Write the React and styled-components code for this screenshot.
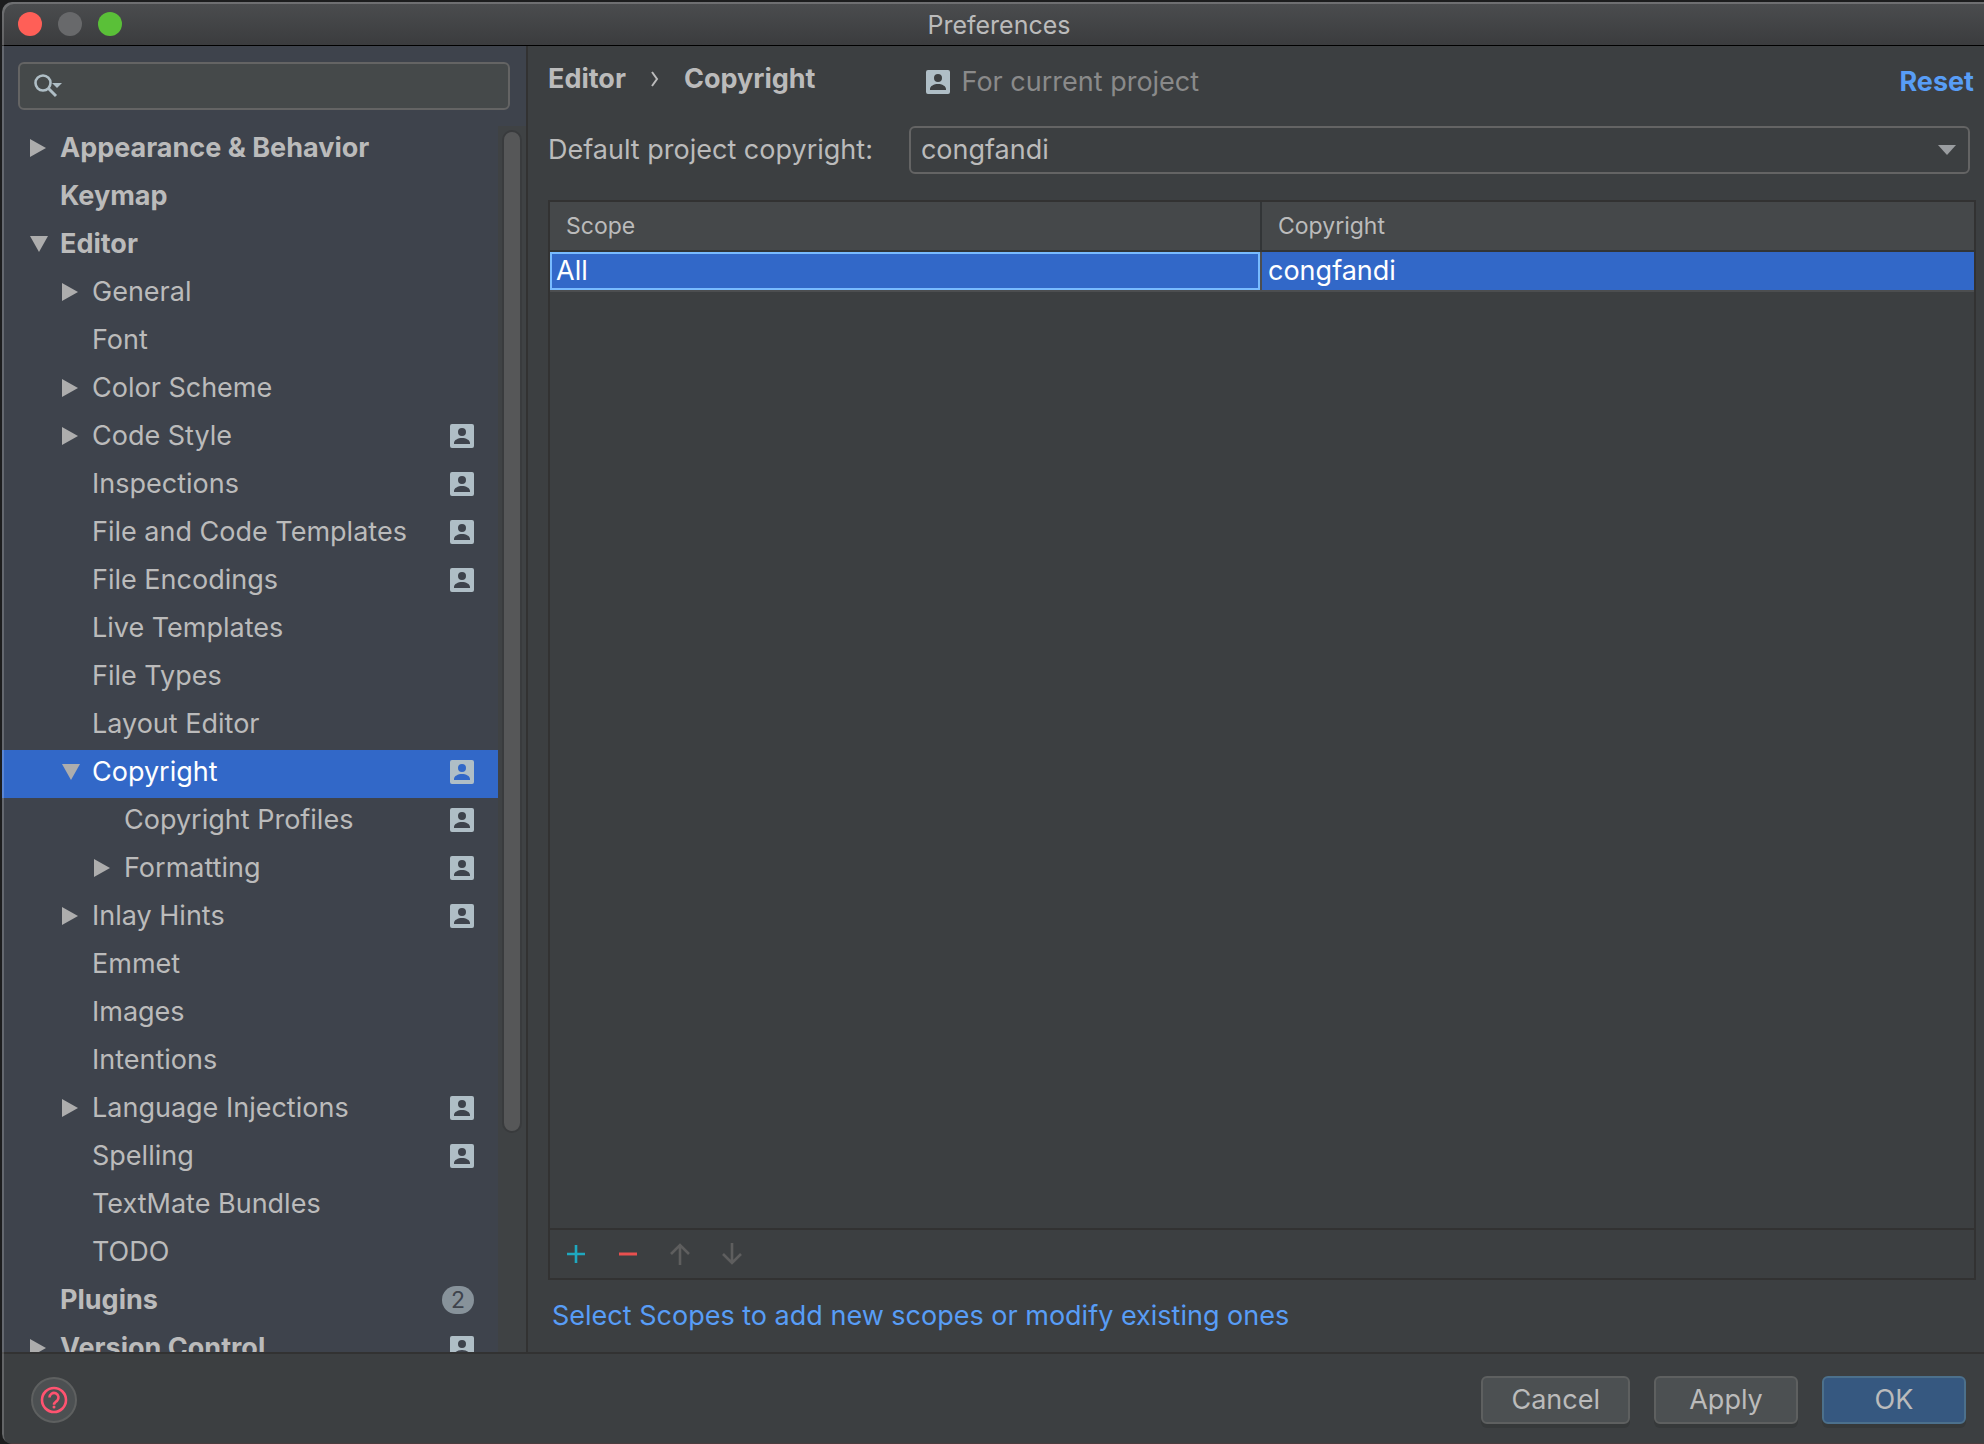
import React, { useState } from "react";
import styled, { createGlobalStyle, css } from "styled-components";

const GlobalStyle = createGlobalStyle`
  * {
    box-sizing: border-box;
  }

  body {
    margin: 0;
    background: #1c1d1e;
    color: #bbbbbb;
    font-family: Inter, "Liberation Sans", sans-serif;
    font-size: 27px;
    line-height: 32px;
  }

  button,
  input,
  select {
    font: inherit;
    color: inherit;
  }
`;

const Dialog = styled.div`
  position: relative;
  display: flex;
  flex-direction: column;
  height: calc(100vh - 2px);
  margin: 2px 0 0 2px;
  background: #3c3f41;
  border-radius: 10px 0 0 10px;
  overflow: hidden;

  &::after {
    content: "";
    position: absolute;
    inset: 0;
    border-radius: 10px 0 0 10px;
    box-shadow: inset 2px 2px 0 rgba(255, 255, 255, 0.2);
    pointer-events: none;
  }
`;

const TitleBar = styled.header`
  display: grid;
  grid-template-columns: 1fr auto 1fr;
  align-items: center;
  height: 44px;
  flex-shrink: 0;
  padding: 0 4px 0 16px;
  background: linear-gradient(#4b4d4f, #3b3c3e);
  border-bottom: 1px solid #000;
`;

const Lights = styled.div`
  display: flex;
  gap: 16px;
`;

const Light = styled.button`
  width: 24px;
  height: 24px;
  padding: 0;
  border: none;
  border-radius: 50%;
  background: ${(props) => props.$color};
`;

const Title = styled.h1`
  margin: 0;
  padding-top: 2px;
  font-size: 25px;
  font-weight: 400;
`;

const Body = styled.div`
  display: flex;
  flex: 1;
  min-height: 0;
`;

const Sidebar = styled.aside`
  display: flex;
  flex-direction: column;
  width: 526px;
  flex-shrink: 0;
  background: #3e434c;
  border-right: 2px solid #323232;
`;

const SearchBox = styled.label`
  display: flex;
  align-items: center;
  height: 48px;
  flex-shrink: 0;
  margin: 16px;
  padding: 0 12px;
  background: #45494a;
  border: 2px solid #646464;
  border-radius: 6px;
`;

const SearchInput = styled.input`
  flex: 1;
  min-width: 0;
  margin-left: 8px;
  padding: 0;
  background: none;
  border: none;
  outline: none;
`;

const TreeArea = styled.div`
  display: flex;
  flex: 1;
  min-height: 0;
`;

const Tree = styled.ul`
  flex: 1;
  margin: 0;
  padding: 0;
  list-style: none;
  overflow-y: auto;
  scrollbar-width: none;
`;

const Row = styled.button`
  display: flex;
  align-items: center;
  width: 100%;
  height: 48px;
  padding: 0 24px 4px ${(props) => 26 + props.$level * 32}px;
  background: none;
  border: none;
  text-align: left;
  white-space: nowrap;
  font-weight: ${(props) => (props.$level === 0 ? 700 : 400)};

  ${(props) =>
    props.$selected &&
    css`
      background: #3268c8;
      color: #ffffff;
    `}
`;

const ArrowSlot = styled.span`
  display: flex;
  align-items: center;
  width: 32px;
`;

const RowLabel = styled.span`
  flex: 1;
`;

const Badge = styled.span`
  width: 32px;
  height: 28px;
  border-radius: 14px;
  background: #87929a;
  color: #3e434c;
  font-size: 23px;
  font-weight: 400;
  line-height: 28px;
  text-align: center;
`;

const Track = styled.div`
  width: 28px;
  padding: 4px;
  background: #3f4244;
`;

const Thumb = styled.div`
  width: 20px;
  height: calc(82% + 4px);
  background: #565758;
  border: 2px solid #393b3d;
  border-radius: 10px;
`;

const Content = styled.main`
  display: flex;
  flex-direction: column;
  flex: 1;
  min-width: 0;
  padding: 16px 8px 20px 20px;
`;

const Heading = styled.div`
  display: flex;
  align-items: center;
  height: 40px;
`;

const Crumbs = styled.h2`
  display: flex;
  align-items: center;
  gap: 24px;
  margin: 0;
  padding-bottom: 6px;
  font-size: 27px;
  font-weight: 700;
`;

const ProjectNote = styled.span`
  display: flex;
  align-items: center;
  gap: 12px;
  flex: 1;
  margin-left: 110px;
  color: #8a8a8a;
`;

const ResetLink = styled.a`
  padding-right: 2px;
  color: #589df6;
  font-weight: 700;
  text-decoration: none;
`;

const Field = styled.div`
  display: flex;
  align-items: center;
  gap: 36px;
  margin: 24px 6px 26px 0;
`;

const SelectWrap = styled.div`
  display: grid;
  flex: 1;
  align-items: center;

  > * {
    grid-area: 1 / 1;
  }

  > svg {
    justify-self: end;
    margin-right: 14px;
    pointer-events: none;
  }
`;

const Select = styled.select`
  width: 100%;
  height: 48px;
  padding: 0 10px;
  appearance: none;
  background: #3c3f41;
  border: 2px solid #646464;
  border-radius: 6px;
`;

const Panel = styled.section`
  display: flex;
  flex-direction: column;
  flex: 1;
  border: 2px solid #323232;
`;

const ScopeTable = styled.table`
  width: 100%;
  border-collapse: separate;
  border-spacing: 0;
  table-layout: fixed;
`;

const HeadCell = styled.th`
  height: 50px;
  padding: 0 16px;
  background: #45484a;
  border-bottom: 2px solid #323537;
  border-right: ${(props) => (props.$last ? "none" : "2px solid #323537")};
  font-size: 23px;
  font-weight: 400;
  text-align: left;
`;

const Cell = styled.td`
  height: 40px;
  padding: 0 6px;
  background: #3268c8;
  border-bottom: 2px solid #4c4e50;
  color: #ffffff;

  ${(props) =>
    props.$focused &&
    css`
      border-right: 2px solid #4c4e50;
      box-shadow: inset 0 0 0 2px #78bbff;
    `}
`;

const Toolbar = styled.div`
  display: flex;
  gap: 20px;
  margin-top: auto;
  padding: 8px 10px;
  border-top: 2px solid #323232;
`;

const ToolButton = styled.button`
  display: flex;
  align-items: center;
  justify-content: center;
  width: 32px;
  height: 32px;
  padding: 0;
  background: none;
  border: none;
`;

const ScopesLink = styled.a`
  align-self: flex-start;
  margin: 20px 0 0 4px;
  color: #589df6;
  text-decoration: none;
`;

const Footer = styled.footer`
  display: flex;
  align-items: center;
  gap: 24px;
  flex-shrink: 0;
  padding: 22px 18px 19px 29px;
  border-top: 2px solid #323232;
  border-bottom: 1px solid #4a3c3e;
`;

const HelpButton = styled.button`
  display: flex;
  align-items: center;
  justify-content: center;
  width: 46px;
  height: 46px;
  margin-right: auto;
  padding: 0;
  background: #4c5052;
  border: 2px solid #5e6060;
  border-radius: 50%;
`;

const Button = styled.button`
  min-width: 144px;
  height: 48px;
  padding: 0 28px;
  background: ${(props) => (props.$primary ? "#365880" : "#4c5052")};
  border: 2px solid ${(props) => (props.$primary ? "#4c708c" : "#5e6060")};
  border-radius: 6px;
  box-shadow: 0 4px 0 #36393a;
`;

const Arrow = ({ open }) => (
  <svg width="20" height="20" viewBox="0 0 20 20" fill="#adadad">
    {open ? <path d="M2 2h18l-9 16z" /> : <path d="M2 1v18l16-9z" />}
  </svg>
);

const ProjectIcon = () => (
  <svg width="24" height="24" viewBox="0 0 24 24" fill="#afbec6">
    <path
      fillRule="evenodd"
      d="M2 0h20a2 2 0 0 1 2 2v20a2 2 0 0 1-2 2H2a2 2 0 0 1-2-2V2a2 2 0 0 1 2-2zM12 4a4 4 0 1 0 0 8 4 4 0 0 0 0-8zM4 20h16v-1c0-3-4-5-8-5s-8 2-8 5z"
    />
  </svg>
);

const SearchIcon = () => (
  <svg width="30" height="28" viewBox="0 0 30 28">
    <g fill="none" stroke="#afbec6">
      <circle cx="11" cy="11" r="7.5" strokeWidth="2.6" />
      <path d="M16 16l8 8" strokeWidth="3" />
    </g>
    <path d="M20 11h10l-5 5z" fill="#afbec6" />
  </svg>
);

const items = [
  { label: "Appearance & Behavior", level: 0, open: false },
  { label: "Keymap", level: 0 },
  { label: "Editor", level: 0, open: true },
  { label: "General", level: 1, open: false },
  { label: "Font", level: 1 },
  { label: "Color Scheme", level: 1, open: false },
  { label: "Code Style", level: 1, open: false, project: true },
  { label: "Inspections", level: 1, project: true },
  { label: "File and Code Templates", level: 1, project: true },
  { label: "File Encodings", level: 1, project: true },
  { label: "Live Templates", level: 1 },
  { label: "File Types", level: 1 },
  { label: "Layout Editor", level: 1 },
  { label: "Copyright", level: 1, open: true, project: true },
  { label: "Copyright Profiles", level: 2, project: true },
  { label: "Formatting", level: 2, open: false, project: true },
  { label: "Inlay Hints", level: 1, open: false, project: true },
  { label: "Emmet", level: 1 },
  { label: "Images", level: 1 },
  { label: "Intentions", level: 1 },
  { label: "Language Injections", level: 1, open: false, project: true },
  { label: "Spelling", level: 1, project: true },
  { label: "TextMate Bundles", level: 1 },
  { label: "TODO", level: 1 },
  { label: "Plugins", level: 0, count: 2 },
  { label: "Version Control", level: 0, open: false, project: true },
];

const SettingsTree = () => {
  const [selected, setSelected] = useState("Copyright");

  return (
    <Tree>
      {items.map((item) => (
        <li key={item.label}>
          <Row
            $level={item.level}
            $selected={item.label === selected}
            aria-expanded={item.open}
            onClick={() => setSelected(item.label)}
          >
            <ArrowSlot>
              {item.open !== undefined && <Arrow open={item.open} />}
            </ArrowSlot>
            <RowLabel>{item.label}</RowLabel>
            {item.project && <ProjectIcon />}
            {item.count && <Badge>{item.count}</Badge>}
          </Row>
        </li>
      ))}
    </Tree>
  );
};

const App = () => (
  <>
    <GlobalStyle />
    <Dialog>
      <TitleBar>
        <Lights>
          <Light $color="#ff5f57" aria-label="Close" />
          <Light $color="#68696b" aria-label="Minimize" />
          <Light $color="#5ac038" aria-label="Zoom" />
        </Lights>
        <Title>Preferences</Title>
      </TitleBar>
      <Body>
        <Sidebar>
          <SearchBox>
            <SearchIcon />
            <SearchInput type="text" aria-label="Search settings" />
          </SearchBox>
          <TreeArea>
            <SettingsTree />
            <Track>
              <Thumb />
            </Track>
          </TreeArea>
        </Sidebar>
        <Content>
          <Heading>
            <Crumbs>
              <span>Editor</span>
              <svg width="10" height="16" viewBox="0 0 10 16">
                <path
                  d="M2 1l5 7-5 7"
                  fill="none"
                  stroke="#bbbbbb"
                  strokeWidth="2"
                />
              </svg>
              <span>Copyright</span>
            </Crumbs>
            <ProjectNote>
              <ProjectIcon />
              For current project
            </ProjectNote>
            <ResetLink href="#reset">Reset</ResetLink>
          </Heading>
          <Field>
            <label htmlFor="default-copyright">
              Default project copyright:
            </label>
            <SelectWrap>
              <Select id="default-copyright" defaultValue="congfandi">
                <option value="congfandi">congfandi</option>
              </Select>
              <svg width="18" height="10" viewBox="0 0 18 10">
                <path d="M0 0h18l-9 10z" fill="#9a9da0" />
              </svg>
            </SelectWrap>
          </Field>
          <Panel>
            <ScopeTable>
              <thead>
                <tr>
                  <HeadCell>Scope</HeadCell>
                  <HeadCell $last>Copyright</HeadCell>
                </tr>
              </thead>
              <tbody>
                <tr>
                  <Cell $focused>All</Cell>
                  <Cell>congfandi</Cell>
                </tr>
              </tbody>
            </ScopeTable>
            <Toolbar>
              <ToolButton aria-label="Add">
                <svg width="20" height="20" viewBox="0 0 20 20">
                  <path
                    d="M10 1v18M1 10h18"
                    stroke="#1fa8bf"
                    strokeWidth="2.6"
                  />
                </svg>
              </ToolButton>
              <ToolButton aria-label="Remove">
                <svg width="20" height="20" viewBox="0 0 20 20">
                  <path d="M1 10h18" stroke="#e9504f" strokeWidth="3" />
                </svg>
              </ToolButton>
              <ToolButton aria-label="Move up" disabled>
                <svg width="22" height="22" viewBox="0 0 22 22">
                  <path
                    d="M11 22V2M2 11l9-9 9 9"
                    fill="none"
                    stroke="#5e5e5e"
                    strokeWidth="2.6"
                  />
                </svg>
              </ToolButton>
              <ToolButton aria-label="Move down" disabled>
                <svg width="22" height="22" viewBox="0 0 22 22">
                  <path
                    d="M11 0v20M2 11l9 9 9-9"
                    fill="none"
                    stroke="#5e5e5e"
                    strokeWidth="2.6"
                  />
                </svg>
              </ToolButton>
            </Toolbar>
          </Panel>
          <ScopesLink href="#scopes">
            Select Scopes to add new scopes or modify existing ones
          </ScopesLink>
        </Content>
      </Body>
      <Footer>
        <HelpButton aria-label="Help">
          <svg width="28" height="28" viewBox="0 0 28 28" fill="none">
            <g stroke="#ff5370" strokeWidth="2.6">
              <circle cx="14" cy="14" r="12" />
              <path d="M9.5 11.5a4.5 4.5 0 1 1 7.6 3.2c-1.6 1.4-3.1 2-3.1 4" />
            </g>
            <circle cx="14" cy="21" r="1.5" fill="#ff5370" />
          </svg>
        </HelpButton>
        <Button>Cancel</Button>
        <Button>Apply</Button>
        <Button $primary>OK</Button>
      </Footer>
    </Dialog>
  </>
);

export default App;
